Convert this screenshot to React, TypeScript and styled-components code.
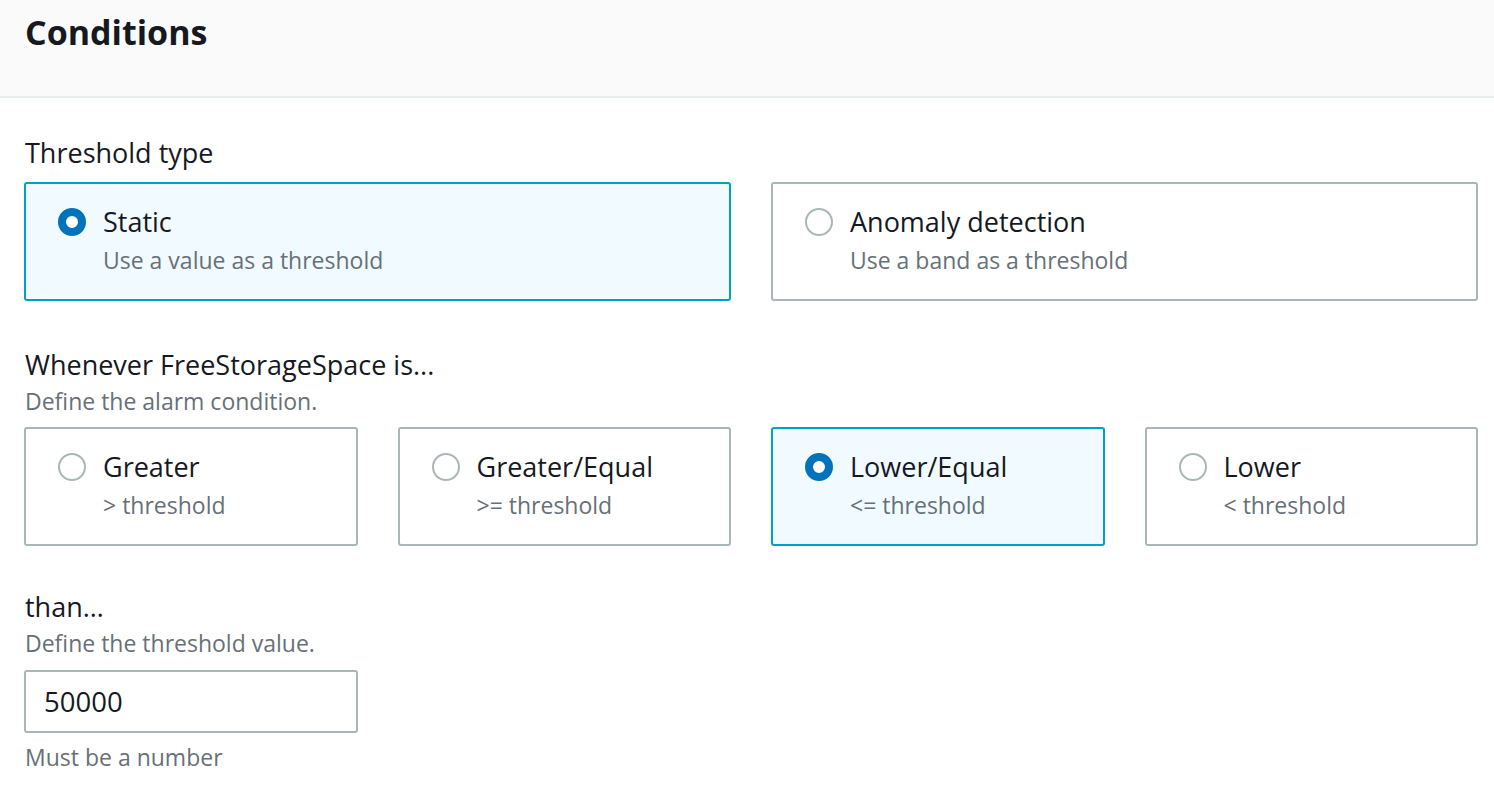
import React from "react";
import styled, { createGlobalStyle } from "styled-components";

const Global = createGlobalStyle`
  html, body { margin: 0; padding: 0; background: #ffffff; }
  body { font-family: "Open Sans", "Noto Sans", Arial, sans-serif; color: #16191f; }
  * { box-sizing: border-box; }
`;

const Page = styled.div`
  width: 1494px;
  min-height: 794px;
  background: #ffffff;
`;

const Header = styled.header`
  height: 98px;
  background: #fafafa;
  border-bottom: 2px solid #eaeded;
  padding: 10px 24px 0 25px;
`;

const Title = styled.h2`
  margin: 0;
  font-size: 34px;
  line-height: 44px;
  font-weight: 700;
  color: #16191f;
`;

const Body = styled.div`
  display: flex;
  flex-direction: column;
  padding: 36px 16px 0 24px;
`;

const Field = styled.div<{ $mt?: number }>`
  display: flex;
  flex-direction: column;
  margin-top: ${(p) => p.$mt ?? 0}px;
`;

const Label = styled.div`
  font-size: 27px;
  line-height: 38px;
  padding-left: 1px;
  color: #16191f;
`;

const Desc = styled.div`
  margin-top: 3px;
  font-size: 23px;
  line-height: 28px;
  padding-left: 1px;
  color: #687078;
`;

const TileGrid = styled.div<{ $cols: number; $mt: number }>`
  display: grid;
  grid-template-columns: repeat(${(p) => p.$cols}, 1fr);
  column-gap: 40px;
  margin-top: ${(p) => p.$mt}px;
`;

const Tile = styled.label<{ $selected?: boolean }>`
  display: flex;
  flex-direction: column;
  height: 119px;
  padding: 19px 30px 0 32px;
  border: 2px solid ${(p) => (p.$selected ? "#00a1c9" : "#aab7b8")};
  border-radius: 3px;
  background: ${(p) => (p.$selected ? "#f1faff" : "#ffffff")};
  cursor: pointer;
`;

const TileHead = styled.div`
  display: flex;
  align-items: center;
  gap: 17px;
`;

const Radio = styled.span<{ $checked?: boolean }>`
  flex: none;
  width: 28px;
  height: 28px;
  border-radius: 50%;
  border: ${(p) => (p.$checked ? "8.5px solid #0073bb" : "2px solid #aab7b8")};
  background: #ffffff;
`;

const TileTitle = styled.span`
  font-size: 27px;
  line-height: 38px;
  color: #16191f;
`;

const TileSub = styled.span`
  margin-top: 5px;
  padding-left: 45px;
  font-size: 23px;
  line-height: 28px;
  color: #687078;
`;

const Input = styled.input`
  width: 334px;
  height: 63px;
  margin-top: 13px;
  padding: 0 18px;
  border: 2px solid #aab7b8;
  border-radius: 3px;
  font-family: inherit;
  font-size: 27.5px;
  color: #16191f;
  background: #ffffff;
  outline: none;
`;

const Constraint = styled.div`
  margin-top: 10px;
  font-size: 23px;
  line-height: 28px;
  padding-left: 1px;
  color: #687078;
`;

type Opt = { title: string; sub: string; selected?: boolean };

const thresholdTypes: Opt[] = [
  { title: "Static", sub: "Use a value as a threshold", selected: true },
  { title: "Anomaly detection", sub: "Use a band as a threshold" },
];

const comparisons: Opt[] = [
  { title: "Greater", sub: "> threshold" },
  { title: "Greater/Equal", sub: ">= threshold" },
  { title: "Lower/Equal", sub: "<= threshold", selected: true },
  { title: "Lower", sub: "< threshold" },
];

const Tiles = ({ opts, mt }: { opts: Opt[]; mt: number }) => (
  <TileGrid $cols={opts.length} $mt={mt}>
    {opts.map((o) => (
      <Tile key={o.title} $selected={o.selected}>
        <TileHead>
          <Radio $checked={o.selected} />
          <TileTitle>{o.title}</TileTitle>
        </TileHead>
        <TileSub>{o.sub}</TileSub>
      </Tile>
    ))}
  </TileGrid>
);

export default function App() {
  return (
    <Page>
      <Global />
      <Header>
        <Title>Conditions</Title>
      </Header>
      <Body>
        <Field>
          <Label>Threshold type</Label>
          <Tiles opts={thresholdTypes} mt={10} />
        </Field>
        <Field $mt={45}>
          <Label>Whenever FreeStorageSpace is...</Label>
          <Desc>Define the alarm condition.</Desc>
          <Tiles opts={comparisons} mt={12} />
        </Field>
        <Field $mt={42}>
          <Label>than…</Label>
          <Desc>Define the threshold value.</Desc>
          <Input defaultValue="50000" />
          <Constraint>Must be a number</Constraint>
        </Field>
      </Body>
    </Page>
  );
}
